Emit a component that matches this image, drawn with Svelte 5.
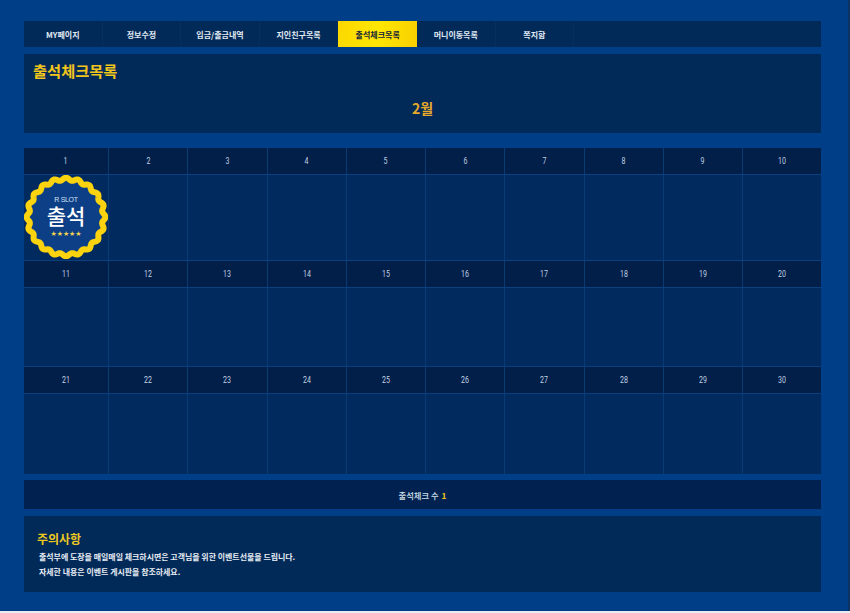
<script>
  const tabs = ['MY페이지', '정보수정', '입금/출금내역', '지인친구목록', '출석체크목록', '머니이동목록', '쪽지함'];
  const active = '출석체크목록';
  const weeks = [
    { days: [1, 2, 3, 4, 5, 6, 7, 8, 9, 10], tall: true },
    { days: [11, 12, 13, 14, 15, 16, 17, 18, 19, 20], tall: false },
    { days: [21, 22, 23, 24, 25, 26, 27, 28, 29, 30], tall: false }
  ];
  const pts = [];
  for (let i = 0; i < 240; i++) {
    const t = (i / 240) * Math.PI * 2;
    const r = 38 + 1.4 * Math.cos(20 * t);
    pts.push(`${(42 + r * Math.sin(t)).toFixed(2)} ${(42 - r * Math.cos(t)).toFixed(2)}`);
  }
  const scallop = 'M' + pts.join(' L') + ' Z';
</script>

<div class="page">
  <nav class="tabs">
    {#each tabs as t}
      <div class="tab" class:on={t === active}>{t}</div>
    {/each}
  </nav>

  <section class="head">
    <h1>출석체크목록</h1>
    <div class="month">2월</div>
  </section>

  <section class="calendar">
    {#each weeks as w}
      <div class="row nums">
        {#each w.days as day}<div class="c"><span>{day}</span></div>{/each}
      </div>
      <div class="row cells" class:tall={w.tall}>
        {#each w.days as day}
          <div class="c">
            {#if day === 1}
              <div class="stamp">
                <svg viewBox="0 0 84 84" width="84" height="84">
                  <path d={scallop} fill="#0c3f86" stroke="#fbd30f" stroke-width="6" stroke-linejoin="round" />
                </svg>
                <div class="s1">R SLOT</div>
                <div class="s2">출석</div>
                <div class="s3">★★★★★</div>
              </div>
            {/if}
          </div>
        {/each}
      </div>
    {/each}
  </section>

  <section class="count">출석체크 수 <b>1</b></section>

  <section class="notice">
    <h2>주의사항</h2>
    <p>출석부에 도장을 매일매일 체크하시면은 고객님을 위한 이벤트선물을 드립니다.</p>
    <p>자세한 내용은 이벤트 게시판을 참조하세요.</p>
  </section>
</div>

<style>
  :global(html) { background: #e8edf3; }
  :global(body) { margin: 0; }
  .page {
    width: 850px; height: 611px; box-sizing: border-box;
    padding: 21px 27px 0 24px;
    background: #003f88;
    border-right: 2px solid #0d3460;
    font-family: "Noto Sans CJK KR", "Noto Sans", sans-serif;
    display: flex; flex-direction: column;
  }
  .tabs { display: grid; grid-template-columns: repeat(7, 78.6px) 1fr; height: 26px; background: #012a58; flex: none; }
  .tab {
    display: flex; align-items: center; justify-content: center;
    font-size: 8px; font-weight: 700; color: #e2eaf3;
    border-right: 1px solid #03305f;
  }
  .tab.on { background: linear-gradient(100deg, #fbd800, #ffe600 50%, #f8cf00); color: #14263c; border-right: none; }
  .head { margin-top: 7px; height: 79px; background: #012a58; position: relative; flex: none; }
  h1 { margin: 0; padding: 6px 0 0 9px; font-size: 15.3px; line-height: 21px; font-weight: 700; color: #f2c51c; }
  .month { position: absolute; left: 0; right: 0; top: 44px; text-align: center; font-size: 14px; line-height: 20px; font-weight: 700; color: #e6a92c; }
  .calendar { margin-top: 15px; height: 325px; flex: none; background: #012a5c; display: flex; flex-direction: column; }
  .row { display: grid; grid-template-columns: 85px repeat(8, 79.25px) 1fr; flex: none; box-sizing: border-box; }
  .nums { height: 27px; background: #011f49; border-bottom: 1px solid #0b3f80; }
  .cells { height: 79px; background: #012a5e; border-bottom: 1px solid #0b3f80; }
  .cells:last-child { border-bottom: none; height: 80px; }
  .cells.tall { height: 86px; }
  .c { border-right: 1px solid #0a3a72; position: relative; display: flex; align-items: center; justify-content: center; color: #c0d0e2; font-family: "Roboto", sans-serif; font-size: 9px; }
  .c span { display: inline-block; transform: scaleX(.78); }
  .c:last-child { border-right: none; }
  .stamp { position: absolute; left: 0; top: 0; width: 84px; height: 86px; color: #fff; font-family: "Noto Sans CJK KR", sans-serif; text-align: center; }
  .stamp svg { position: absolute; left: 0; top: 0; }
  .s1, .s2, .s3 { position: absolute; left: 0; width: 84px; }
  .s1 { top: 20px; font-size: 7px; line-height: 9px; letter-spacing: -.3px; color: #d3e0ef; font-family: "Liberation Sans", sans-serif; }
  .s2 { top: 26px; font-size: 21px; line-height: 28px; font-weight: 500; }
  .s3 { top: 55px; font-size: 7px; line-height: 9px; color: #f6d452; letter-spacing: -.1px; font-family: "DejaVu Sans", sans-serif; }
  .count { margin-top: 7px; height: 29px; flex: none; background: #012250; color: #d5e0ec; font-size: 8.3px; font-weight: 500; display: flex; align-items: center; justify-content: center; gap: 3px; }
  .count b { color: #f2c51c; font-weight: 700; }
  .notice { margin-top: 7px; height: 76px; flex: none; background: #012a58; padding: 14px 0 0 13px; box-sizing: border-box; }
  h2 { margin: 0 0 2px; font-size: 12px; line-height: 17px; font-weight: 700; color: #edc81f; }
  p { margin: 0 0 0 2px; font-size: 7.95px; line-height: 15px; font-weight: 700; color: #e8eef5; }
</style>
